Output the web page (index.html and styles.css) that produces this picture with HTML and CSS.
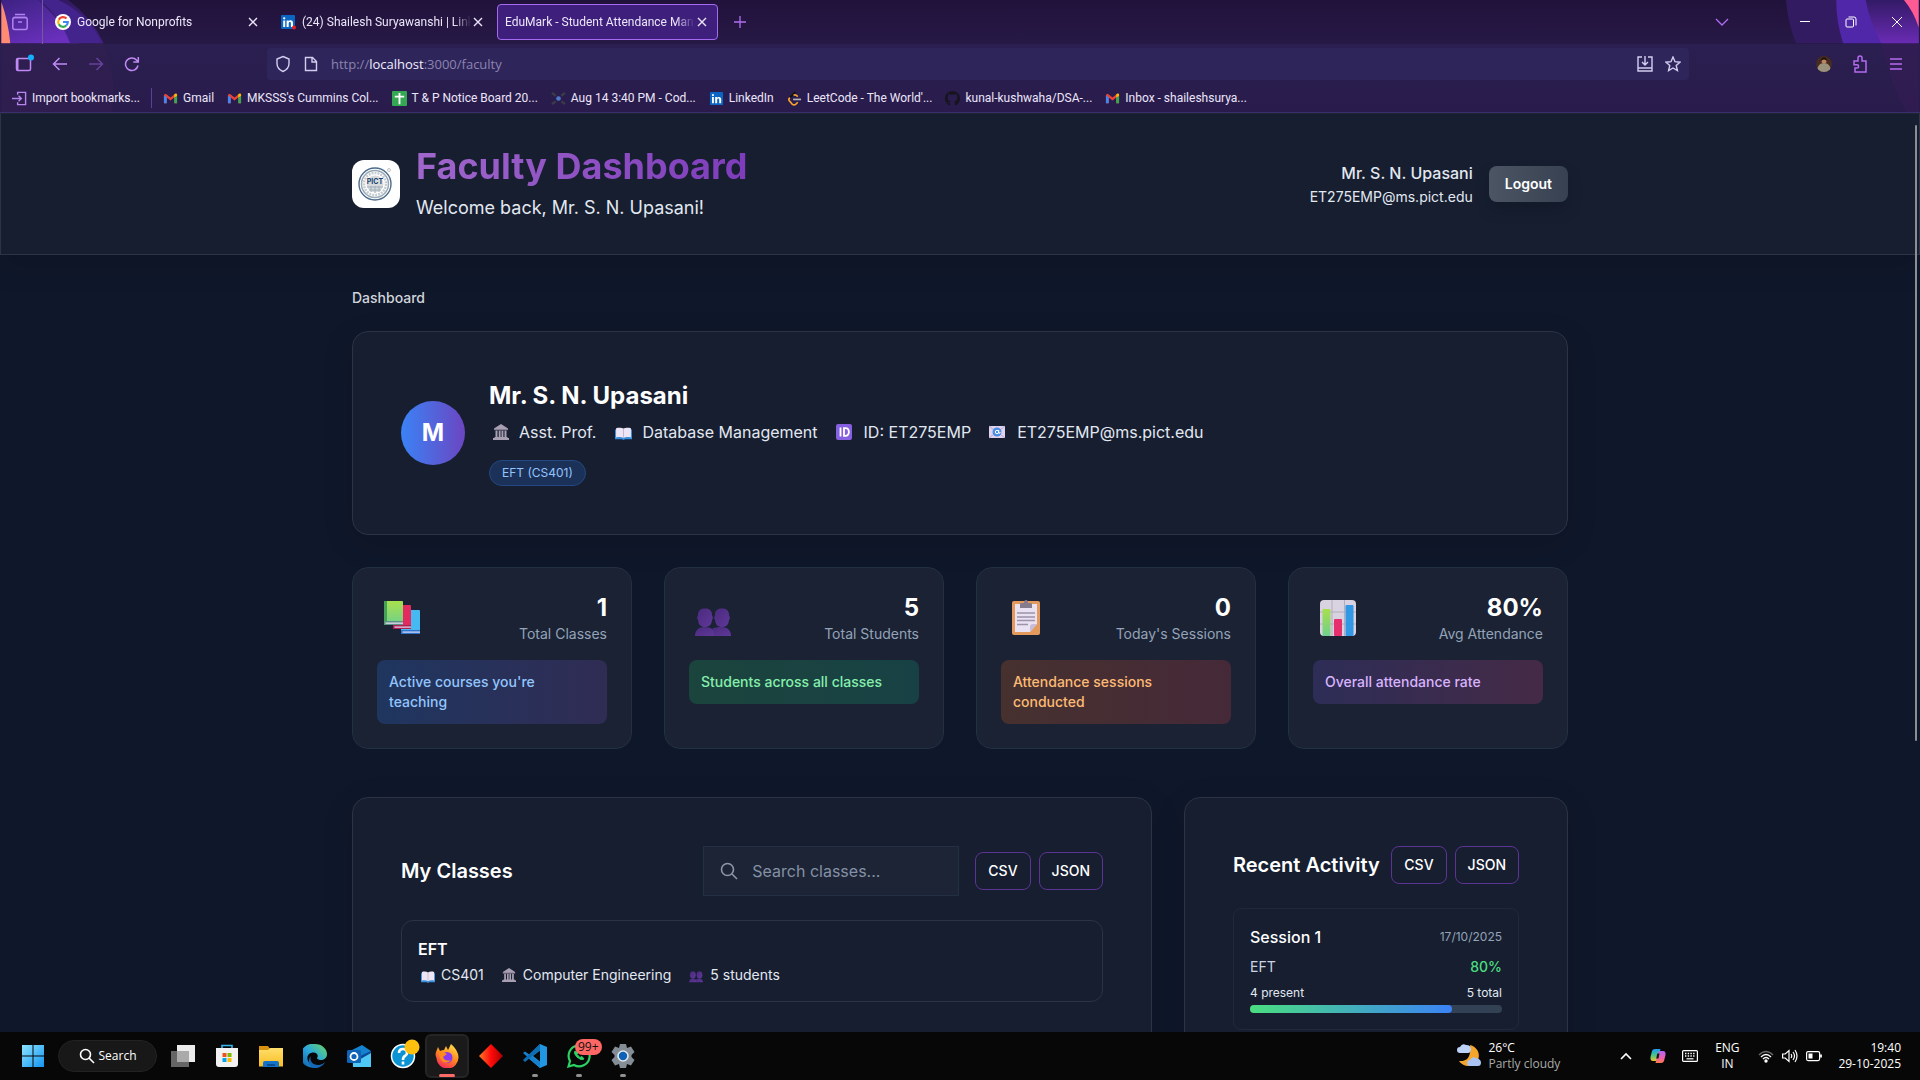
FILE: index.html
```html
<!DOCTYPE html>
<html lang="en">
<head>
<meta charset="utf-8">
<title>EduMark - Student Attendance Management</title>
<link rel="stylesheet" href="styles.css">
</head>
<body>
<svg class="defs" width="0" height="0" aria-hidden="true">
  <defs>
    <linearGradient id="g-book1" x1="0" y1="0" x2="0" y2="1"><stop offset="0" stop-color="#a8e04c"/><stop offset="1" stop-color="#6fd08c"/></linearGradient>
    <linearGradient id="g-head" x1="0" y1="0" x2="1" y2="1"><stop offset="0" stop-color="#4a2a7d"/><stop offset="1" stop-color="#5f3899"/></linearGradient>
    <linearGradient id="g-win" x1="0" y1="0" x2="1" y2="1"><stop offset="0" stop-color="#8be4ff"/><stop offset="1" stop-color="#1494f2"/></linearGradient>
    <linearGradient id="g-edge" x1="0" y1="1" x2="1" y2="0"><stop offset="0" stop-color="#0c59a4"/><stop offset=".5" stop-color="#2aa7de"/><stop offset="1" stop-color="#6bd95c"/></linearGradient>
    <linearGradient id="g-fox" x1=".8" y1="0" x2=".3" y2="1"><stop offset="0" stop-color="#ffe14a"/><stop offset=".5" stop-color="#ff8a1e"/><stop offset="1" stop-color="#f5275c"/></linearGradient>
    <linearGradient id="g-gem" x1="0" y1="0" x2="1" y2="0"><stop offset="0" stop-color="#ff7a2a"/><stop offset=".5" stop-color="#ff0a0a"/><stop offset="1" stop-color="#a80000"/></linearGradient>
    <linearGradient id="g-folder" x1="0" y1="0" x2="0" y2="1"><stop offset="0" stop-color="#ffdf6b"/><stop offset="1" stop-color="#f9bd24"/></linearGradient>
    <linearGradient id="g-copa" x1="0" y1="0" x2="0" y2="1"><stop offset="0" stop-color="#1f9bf0"/><stop offset=".5" stop-color="#43c58a"/><stop offset="1" stop-color="#e8c22f"/></linearGradient>
    <linearGradient id="g-copb" x1="0" y1="0" x2="0" y2="1"><stop offset="0" stop-color="#b066f5"/><stop offset=".6" stop-color="#f060a8"/><stop offset="1" stop-color="#ff7a4a"/></linearGradient>
    <symbol id="gmail" viewBox="0 0 16 16"><path d="M1 4v9h3V7l4 3 4-3v6h3V4l-2-1-5 4-5-4z" fill="#ea4335"/><path d="M1 4.500V13h3V7z" fill="#4285f4"/><path d="M15 4.500V13h-3V7z" fill="#34a853"/><path d="M12 3.700V7l3-2V4c0-1.500-2-1.800-3-.3z" fill="#fbbc04"/></symbol>
    <symbol id="linkedin" viewBox="0 0 16 16"><rect x="1" y="1" width="14" height="14" rx="1" fill="#0a66c2"/><path d="M3.200 6.400h2V13h-2zM4.200 3.200a1.100 1.100 0 1 1 0 2.300 1.100 1.100 0 0 1 0-2.300M6.600 6.400h2v.9c.8-1.500 4.400-1.600 4.400 1.600V13h-2.100V9.500c0-2-2.200-1.800-2.200 0V13H6.600z" fill="#fff"/></symbol>
    <symbol id="close" viewBox="0 0 12 12"><path d="M2 2l8 8M10 2l-8 8" stroke="currentColor" stroke-width="1.400"/></symbol>
    <symbol id="bank" viewBox="0 0 16 16"><path d="M8 0l7 4.500V6H1V4.500zM2.500 6.500h2V13h-2zM5.700 6.500h1.900V13H5.700zM8.500 6.500h1.900V13H8.500zM11.500 6.500h2V13h-2zM1.500 13h13v1H16v2H0v-2h1.500z" fill="#a99fb3"/><path d="M1 5.300h14v.9H1z" fill="#7d7389"/></symbol>
    <symbol id="book" viewBox="0 0 16 16" preserveAspectRatio="none"><path d="M0 4h16v11H9.500L8 16l-1.500-1H0z" fill="#3b8fdc"/><path d="M1 2.500c3-1 5.500-.5 7 .5 1.500-1 4-1.500 7-.5V13c-3-.6-5.500-.3-7 .8-1.500-1.100-4-1.400-7-.8z" fill="#eee6f5"/><path d="M8 3v10.500" stroke="#c4bad0"/></symbol>
    <symbol id="people" viewBox="0 0 36 36"><g fill="url(#g-head)"><path d="M3 8c0-5 3-6.500 7-6.500S17 3 17 8l1 3-1 2c-.5 5-3 7-7 7s-6.500-2-7-7l-1-2z"/><path d="M20 8c0-5 3-6.500 7-6.500S34 3 34 8l1 3-1 2c-.5 5-3 7-7 7s-6.500-2-7-7l-1-2z"/><path d="M0 29c0-5 3-9 9-9 8 0 11 3 11 9H0z"/><path d="M19 29c0-5-.500-5-2-7 2-1.500 5-2 10-2 6 0 9 4 9 9z"/></g></symbol>
  </defs>
</svg>

<div class="browser">
  <svg class="theme-left" viewBox="0 0 160 114" aria-hidden="true">
    <defs><linearGradient id="tl" x1="0" y1="0" x2=".6" y2="1"><stop offset="0" stop-color="#3d2282"/><stop offset="1" stop-color="#6a30bd"/></linearGradient>
    <linearGradient id="tl2" x1="0" y1="0" x2="1" y2="1"><stop offset="0" stop-color="#32195f"/><stop offset="1" stop-color="#4d24a0"/></linearGradient></defs>
    <path d="M0 0h68q24 18 36 44H0z" fill="url(#tl2)" opacity=".7"/>
    <path d="M0 0h38q20 20 40 44H0z" fill="url(#tl)"/>
    <path d="M38 0h20q30 14 44 44H70Q58 14 38 0z" fill="#43248d"/>
    <path d="M0 2q7 20 9 42H0z" fill="#ff8b72"/>
    <path d="M0 44h104q14 30 8 70H0z" fill="#3a2052" opacity=".35"/>
  </svg>
  <svg class="theme-right" viewBox="0 0 150 114" aria-hidden="true">
    <defs><linearGradient id="tr" x1="0" y1="0" x2="0" y2="1"><stop offset="0" stop-color="#331a66"/><stop offset="1" stop-color="#6a2bb4"/></linearGradient></defs>
    <path d="M15 0h135v44H25Q16 20 15 0z" fill="#331b62"/>
    <path d="M66 0h84v44H73Q66 22 66 0z" fill="#5027a8"/>
    <path d="M96 0h54v44h-38Q100 22 96 0z" fill="url(#tr)"/>
    <path d="M135 0h15v28q-5-16-15-28z" fill="#ff5a94"/>
    <path d="M112 44h38v70h-12q-18-30-26-70z" fill="#3d1c58" opacity=".4"/>
  </svg>
  <div class="tabbar">
    <button class="icon-btn view" aria-label="Firefox View"><svg width="18" height="18" viewBox="0 0 18 18" fill="none" stroke="#b182f0" stroke-width="1.500"><path d="M4 1.500h10M2.500 4.500h13"/><rect x="1.800" y="4.500" width="14.400" height="12" rx="2"/><path d="M7 9h4"/></svg></button>
    <div class="tabs">
      <div class="tab"><svg width="16" height="16" viewBox="0 0 16 16"><circle cx="8" cy="8" r="8" fill="#fff"/><g fill="none" stroke-width="2.200"><path d="M11.500 4.600A4.800 4.800 0 0 0 3.800 5.700" stroke="#ea4335"/><path d="M3.800 5.700a4.800 4.800 0 0 0 0 4.600" stroke="#fbbc05"/><path d="M3.800 10.300a4.800 4.800 0 0 0 7.500 1.200" stroke="#34a853"/><path d="M11.300 11.500A4.800 4.800 0 0 0 12.800 8H8" stroke="#4285f4"/></g></svg><span class="tab-title">Google for Nonprofits</span><button class="tab-x" aria-label="Close tab"><svg width="12" height="12"><use href="#close"/></svg></button></div>
      <div class="tab"><svg width="16" height="16" viewBox="0 0 16 16"><use href="#linkedin"/><circle cx="14" cy="13.500" r="2" fill="#e02020"/></svg><span class="tab-title">(24) Shailesh Suryawanshi | Link</span><button class="tab-x" aria-label="Close tab"><svg width="12" height="12"><use href="#close"/></svg></button></div>
      <div class="tab active"><span class="tab-title">EduMark - Student Attendance Man</span><button class="tab-x" aria-label="Close tab"><svg width="12" height="12"><use href="#close"/></svg></button></div>
    </div>
    <button class="icon-btn" aria-label="New tab"><svg width="14" height="14" viewBox="0 0 14 14"><path d="M7 1v12M1 7h12" stroke="#b06df0" stroke-width="1.300"/></svg></button>
    <span class="grow"></span>
    <button class="icon-btn list-tabs" aria-label="List all tabs"><svg width="14" height="14" viewBox="0 0 14 14"><path d="M1 4l6 6 6-6" stroke="#b06df0" stroke-width="1.300" fill="none"/></svg></button>
    <button class="win-btn" aria-label="Minimize"><svg width="12" height="12" viewBox="0 0 12 12"><path d="M1 5.500h10" stroke="#fff"/></svg></button>
    <button class="win-btn" aria-label="Restore"><svg width="12" height="12" viewBox="0 0 12 12" fill="none" stroke="#fff"><rect x="1" y="3" width="7.500" height="8" rx="1"/><path d="M3.500 1H9q2 0 2 2v6.500"/></svg></button>
    <button class="win-btn" aria-label="Close"><svg width="12" height="12" viewBox="0 0 12 12"><path d="M1 1l10 10M11 1L1 11" stroke="#fff"/></svg></button>
  </div>
  <div class="navbar">
    <div class="nav-left">
      <button class="icon-btn" aria-label="Sidebar"><svg width="20" height="20" viewBox="0 0 20 20" fill="none"><rect x="2.500" y="4.500" width="14" height="12" rx="1.500" stroke="#c08af5" stroke-width="1.500"/><path d="M3.500 5v11" stroke="#c08af5" stroke-width="2"/><circle cx="17" cy="3.500" r="3" fill="#12b0ff"/></svg></button>
      <button class="icon-btn" aria-label="Back"><svg width="16" height="16" viewBox="0 0 16 16" fill="none" stroke="#c08af5" stroke-width="1.500"><path d="M15 8H1.500M7.500 2l-6 6 6 6"/></svg></button>
      <button class="icon-btn" aria-label="Forward"><svg width="16" height="16" viewBox="0 0 16 16" fill="none" stroke="#66429a" stroke-width="1.500"><path d="M1 8h13.500M8.500 2l6 6-6 6"/></svg></button>
      <button class="icon-btn" aria-label="Reload"><svg width="16" height="16" viewBox="0 0 16 16" fill="none" stroke="#c08af5" stroke-width="1.500"><path d="M14 9.500A6.300 6.300 0 1 1 12.500 4l1.500 1.500M14.300 1v5h-5"/></svg></button>
    </div>
    <div class="urlbar">
      <svg width="16" height="18" viewBox="0 0 16 18" fill="none" stroke="#d4cdf0" stroke-width="1.400"><path d="M8 1.500l6 2.500v4.500c0 4-2.500 6.500-6 8-3.500-1.500-6-4-6-8V4z"/></svg>
      <svg width="16" height="16" viewBox="0 0 16 16" fill="none" stroke="#d4cdf0" stroke-width="1.400"><path d="M2.500 1.500h7l4 4v9h-11zM9 2v4h4"/></svg>
      <span class="url">http://<b>localhost</b>:3000/faculty</span>
      <svg width="16" height="16" viewBox="0 0 16 16" fill="none" stroke="#d4cdf0" stroke-width="1.400"><path d="M5 1H1v14h14V1h-4M1 12h14M8 0v9M5 6l3 3 3-3"/></svg>
      <svg width="16" height="16" viewBox="0 0 16 16" fill="none" stroke="#d4cdf0" stroke-width="1.400"><path d="M8 1l2 4.700 5 .5-3.800 3.300 1.200 5L8 12l-4.400 2.500 1.200-5L1 6.200l5-.5z"/></svg>
    </div>
    <div class="nav-right">
      <button class="icon-btn" aria-label="Account"><svg width="16" height="16" viewBox="0 0 16 16"><clipPath id="av"><circle cx="8" cy="8" r="8"/></clipPath><g clip-path="url(#av)"><path d="M0 0h16v16H0z" fill="#472a20"/><path d="M1 16c0-6 3-9 7-9s7 3 7 9z" fill="#9a927c"/><circle cx="8" cy="5" r="2.500" fill="#b98660"/><path d="M5 5c0-5 6-5 6 0-2-2-4-2-6 0z" fill="#22150f"/></g></svg></button>
      <button class="icon-btn" aria-label="Extensions"><svg width="16" height="18" viewBox="0 0 16 18" fill="none" stroke="#b56bf0" stroke-width="1.500"><path d="M6 6V3a2 2 0 0 1 4 0v3h4v11H3v-4h2a1.600 1.600 0 0 0 0-3.200H2V6z"/></svg></button>
      <button class="icon-btn" aria-label="Menu"><svg width="14" height="14" viewBox="0 0 14 14" stroke="#b56bf0" stroke-width="1.300"><path d="M1 2h12M1 7h12M1 12h12"/></svg></button>
    </div>
  </div>
  <nav class="bookmarks">
    <a href="#"><svg width="15" height="15" viewBox="0 0 16 16" fill="none" stroke="#b586ee" stroke-width="1.500"><path d="M6 4V1.500h8.500v13H6V12M0 8h10M7 5l3 3-3 3"/></svg>Import bookmarks...</a>
    <span class="sep"></span>
    <a href="#"><svg width="15" height="15"><use href="#gmail"/></svg>Gmail</a>
    <a href="#"><svg width="15" height="15"><use href="#gmail"/></svg>MKSSS's Cummins Col...</a>
    <a href="#"><svg width="15" height="15" viewBox="0 0 16 16"><rect width="16" height="16" rx="1" fill="#34a853"/><path d="M8 2v12M3 6h10" stroke="#fff" stroke-width="2"/></svg>T &amp; P Notice Board 20...</a>
    <a href="#"><svg width="15" height="15" viewBox="0 0 16 16"><path d="M1 2l4 3M15 2l-4 3M1 14l4-3M15 14l-4-3" stroke="#3a3c48" stroke-width="2.500"/><circle cx="8" cy="8" r="2.500" fill="#4f78c4"/></svg>Aug 14 3:40 PM - Cod...</a>
    <a href="#"><svg width="15" height="15"><use href="#linkedin"/></svg>LinkedIn</a>
    <a href="#"><svg width="15" height="15" viewBox="0 0 16 16" fill="none" stroke-width="1.800"><path d="M9 1L3 7" stroke="#111"/><path d="M3 7q-2 2 0 4l2.500 3q2 1.500 4 0l2-2" stroke="#f5a32a"/><path d="M7 4.500q2-1 4.500 1.500" stroke="#f5a32a"/><path d="M6.500 9H15" stroke="#b5b2b8"/></svg>LeetCode - The World'...</a>
    <a href="#"><svg width="15" height="15" viewBox="0 0 16 16"><path d="M8 0a8 8 0 0 0-2.500 15.600V13c-2 .4-2.600-1-3-1.600 1.500-.2 1.600 1 3 .6.100-.6.300-1 .6-1.200-2.500-.3-3.600-1.800-3.300-4 0-.7.300-1.200.7-1.700-.2-.7-.2-1.500.1-2 1 0 1.700.6 2.200 1 1.300-.4 3-.4 4.300 0 .6-.5 1.300-1 2.300-1 .3.600.3 1.300.1 2 .4.500.7 1 .7 1.700.2 2.500-.8 3.700-3.300 4 .4.500.6 1 .6 1.800v3A8 8 0 0 0 8 0" fill="#17131f"/></svg>kunal-kushwaha/DSA-...</a>
    <a href="#"><svg width="15" height="15"><use href="#gmail"/></svg>Inbox - shaileshsurya...</a>
  </nav>
</div>

<div class="viewport">
  <header class="site-header">
    <div class="container head-row">
      <div class="logo"><svg width="36" height="36" viewBox="0 0 36 36"><g fill="none"><circle cx="17" cy="18" r="16" stroke="#4d6d8d" stroke-width="1.400"/><circle cx="17" cy="18" r="13.500" stroke="#9aa9b5" stroke-width="1.500"/><circle cx="17" cy="18" r="11" stroke="#c5cdd3" stroke-width="2.500" stroke-dasharray="2 1"/><circle cx="17" cy="18" r="8.500" fill="#d9dadb"/><path d="M9 21h16M11 24h12M17 20v7M13 20v6M21 20v6" stroke="#9fb0bd"/><circle cx="31" cy="4" r="1.500" stroke="#aaa" stroke-width=".7"/></g><text x="17" y="18" text-anchor="middle" class="logo-text">PICT</text></svg></div>
      <div class="head-titles">
        <h1>Faculty Dashboard</h1>
        <p>Welcome back, Mr. S. N. Upasani!</p>
      </div>
      <div class="head-user"><strong>Mr. S. N. Upasani</strong><span>ET275EMP@ms.pict.edu</span></div>
      <button class="logout">Logout</button>
    </div>
  </header>
  <main class="container main">
    <p class="crumb">Dashboard</p>
    <section class="card profile">
      <div class="avatar">M</div>
      <div>
        <h2>Mr. S. N. Upasani</h2>
        <ul class="facts">
          <li><svg width="22" height="16"><use href="#bank" x="4" width="16" height="16"/></svg>Asst. Prof.</li>
          <li><svg width="22" height="16"><use href="#book" x="3" y="2" width="17" height="14"/></svg>Database Management</li>
          <li><svg width="22" height="16" viewBox="0 0 22 16"><rect x="2" width="16" height="16" rx="2" fill="#8660e0"/><path d="M6.500 3.500v9M10 4.200h1.500c4.500 0 4.500 7.600 0 7.600H10z" stroke="#fff" stroke-width="1.800" fill="none"/></svg>ID: ET275EMP</li>
          <li><svg width="22" height="16" viewBox="0 0 22 16"><rect x="2" y="2" width="16" height="12" rx="1" fill="#e0d3f0"/><path d="M2 2l5 4M18 2l-5 4M2 14l5-4M18 14l-5-4" stroke="#bba8d2"/><circle cx="10" cy="8" r="4.500" fill="#4b8fe2"/><circle cx="10" cy="8" r="1.700" fill="none" stroke="#fff"/><path d="M11.700 6v3q1.500 1 1.500-1" fill="none" stroke="#fff"/></svg>ET275EMP@ms.pict.edu</li>
        </ul>
        <span class="pill">EFT (CS401)</span>
      </div>
    </section>

    <section class="stats">
      <article class="stat">
        <div class="stat-top"><svg width="50" height="36" viewBox="0 0 50 36"><g transform="translate(7 1)"><rect x="17" y="9" width="19" height="24" rx="1" fill="#46b8f2"/><path d="M17 29h19v4H17z" fill="#2c75cf"/><path d="M18.500 30.500H36v1.200H18.500z" fill="#e4dcf2"/><rect x="9" y="4" width="18" height="24" rx="1" fill="#e22c60"/><path d="M9 24h18v4H9z" fill="#b01e52"/><path d="M10.500 25.500H27v1.200H10.500z" fill="#e4dcf2"/><rect width="19" height="24" rx="1" fill="url(#g-book1)"/><path d="M0 0h3v24H0z" fill="#45a05a"/><path d="M1 20h18v4H1z" fill="#5c8f83"/><path d="M1.500 21.500H19v1.300H1.500z" fill="#e4dcf2"/></g></svg>
          <div class="stat-num"><strong>1</strong><span>Total Classes</span></div></div>
        <p class="note blue">Active courses you're teaching</p>
      </article>
      <article class="stat">
        <div class="stat-top"><svg width="50" height="36"><use href="#people" x="6" y="7" width="36" height="36"/></svg>
          <div class="stat-num"><strong>5</strong><span>Total Students</span></div></div>
        <p class="note green">Students across all classes</p>
      </article>
      <article class="stat">
        <div class="stat-top"><svg width="50" height="36" viewBox="0 0 50 36"><g transform="translate(11 0)"><rect y="1" width="28" height="34" rx="2" fill="#e49a5c"/><path d="M3 4h22v20l-7 8H3z" fill="#e9e2f3"/><path d="M25 24v0l-7 8v-5q0-3 3-3z" fill="#c9bcd8"/><path d="M8 8V4q0-1 2-1h2q0-3 2-3t2 3h2q2 0 2 1v4z" fill="#857c8e"/><path d="M5 13h18M5 17h18M5 20.500h18M5 24.500h11" stroke="#9d93ab" stroke-width="1.300"/></g></svg>
          <div class="stat-num"><strong>0</strong><span>Today's Sessions</span></div></div>
        <p class="note orange">Attendance sessions conducted</p>
      </article>
      <article class="stat">
        <div class="stat-top"><svg width="50" height="36" viewBox="0 0 50 36"><g transform="translate(7 0)"><rect width="36" height="36" rx="4" fill="#d9d2e0"/><path d="M12 0v36M24.500 0v36M0 12h36M0 24h36" stroke="#b4abc0"/><rect x="2.500" y="9" width="8" height="27" rx="1" fill="url(#g-book1)"/><rect x="14" y="19" width="8" height="17" rx="1" fill="#e6306e"/><rect x="25.500" y="5" width="8" height="31" rx="1" fill="#3297e4"/></g></svg>
          <div class="stat-num"><strong>80%</strong><span>Avg Attendance</span></div></div>
        <p class="note purple">Overall attendance rate</p>
      </article>
    </section>

    <section class="columns">
      <div class="card panel">
        <div class="panel-head">
          <h3>My Classes</h3>
          <div class="tools">
            <label class="search"><svg width="18" height="18" viewBox="0 0 18 18" fill="none" stroke="#8d96a6" stroke-width="1.600"><circle cx="7.500" cy="7.500" r="6"/><path d="M12 12l5 5"/></svg><input type="text" placeholder="Search classes..." aria-label="Search classes"></label>
            <div class="exports"><button class="outline">CSV</button><button class="outline">JSON</button></div>
          </div>
        </div>
        <div class="class-item">
          <h4>EFT</h4>
          <ul class="meta">
            <li><svg width="19" height="16"><use href="#book" x="3" y="3" width="14" height="13"/></svg>CS401</li>
            <li><svg width="19" height="16"><use href="#bank" x="2" y="1" width="14" height="14"/></svg>Computer Engineering</li>
            <li><svg width="19" height="16"><use href="#people" x="2" y="4" width="14" height="14"/></svg>5 students</li>
          </ul>
        </div>
      </div>
      <div class="card panel">
        <div class="panel-head">
          <h3>Recent Activity</h3>
          <div class="exports"><button class="outline">CSV</button><button class="outline">JSON</button></div>
        </div>
        <div class="session">
          <div class="row"><h4>Session 1</h4><time>17/10/2025</time></div>
          <div class="row mid"><span>EFT</span><b>80%</b></div>
          <div class="row counts"><span>4 present</span><span>5 total</span></div>
          <div class="bar"><div class="fill" style="width:80%"></div></div>
        </div>
      </div>
    </section>
  </main>
  <div class="scrollbar"></div>
</div>

<footer class="taskbar">
  <button class="task" aria-label="Start"><svg width="24" height="24" viewBox="0 0 24 24" fill="url(#g-win)"><path d="M1 1h10.500v10.500H1zM12.500 1H23v10.500H12.500zM1 12.500h10.500V23H1zM12.500 12.500H23V23H12.500z"/></svg></button>
  <button class="task-search"><svg width="16" height="16" viewBox="0 0 16 16" fill="none" stroke="#fff" stroke-width="1.600"><circle cx="6.500" cy="6.500" r="5"/><path d="M10 10l5 5"/></svg>Search</button>
  <button class="task" aria-label="Task view"><svg width="24" height="24" viewBox="0 0 24 24"><rect x="6" y="1" width="18" height="17" fill="#ececec"/><rect y="7" width="18" height="16" fill="#666"/><path d="M6 7h12v11H6z" fill="#aaa"/></svg></button>
  <button class="task" aria-label="Store"><svg width="24" height="24" viewBox="0 0 24 24"><path d="M7 5V1.500h10V5" fill="none" stroke="#34b8f2" stroke-width="1.600"/><path d="M1 4h22v16q0 3-3 3H4q-3 0-3-3z" fill="#f2f2f2"/><path d="M7.500 9h4v4h-4z" fill="#f25022"/><path d="M12.500 9h4v4h-4z" fill="#7fba00"/><path d="M7.500 14h4v4h-4z" fill="#00a4ef"/><path d="M12.500 14h4v4h-4z" fill="#ffb900"/></svg></button>
  <button class="task" aria-label="Files"><svg width="24" height="24" viewBox="0 0 24 24"><path d="M0 2h9l2 3v5H0z" fill="#d9940f"/><path d="M0 6h9l2-2h13v18.500H0z" fill="url(#g-folder)"/><path d="M4 23v-4q0-2 2-2h12q2 0 2 2v4z" fill="#1473c8"/><path d="M8 20h8v2H8z" fill="#0b4f91"/></svg></button>
  <button class="task" aria-label="Edge"><svg width="24" height="24" viewBox="0 0 24 24"><path d="M12 0c7 0 12 5 12 10 0 4-3 6-6.500 6-3 0-4-1.500-3-3 1-2-1-4.500-4-4.500C6 8.500 3 12 5 17c2 4 6 6 10 5.500A12 12 0 1 1 12 0z" fill="url(#g-edge)"/><path d="M8 12c-2 5 2 9.500 8 9 3-.5 5-2 6-3-2 4-6 6-10 6C6 24 4 16 8 12z" fill="#1467b5"/></svg></button>
  <button class="task" aria-label="Outlook"><svg width="24" height="24" viewBox="0 0 24 24"><path d="M5 6l10-5 9 6v16H6z" fill="#1582d0"/><path d="M6 14l18-5v14H6z" fill="#50c8f5"/><path d="M10 17l14-8v-2L11 13z" fill="#0b4a96"/><rect y="6" width="14" height="13" rx="1.500" fill="#0f64b8"/><circle cx="7" cy="12.500" r="3.500" fill="none" stroke="#fff" stroke-width="1.800"/></svg></button>
  <button class="task" aria-label="Help"><svg width="34" height="34" viewBox="0 0 34 34"><circle cx="17" cy="17" r="11.500" fill="#0c93d4" stroke="#fff" stroke-width="1.500"/><path d="M13 14q0-4 4-4t4 4q0 2-2 3t-2 4M17 22.500v3" fill="none" stroke="#fff" stroke-width="2.600"/><circle cx="26" cy="8" r="7.500" fill="#ffbf0f"/></svg></button>
  <button class="task open" aria-label="Firefox"><svg width="24" height="24" viewBox="0 0 24 24"><path d="M1 8l2-5 2 4q2-1 4-1l2-4 2 4 3-6q7 6 7.500 13A11 11 0 0 1 1.500 14Q0 11 1 8z" fill="url(#g-fox)"/><circle cx="12" cy="13.500" r="5.500" fill="#8a3bf0"/><path d="M4 9q4-2 8 1l-4 3q2 5 8 3-3 4-8 2-4-3-4-9z" fill="#ff8a1e"/></svg><i class="ind"></i></button>
  <button class="task" aria-label="Gem"><svg width="24" height="24" viewBox="0 0 24 24"><path d="M12 0l12 12-12 12L0 12z" fill="url(#g-gem)"/></svg></button>
  <button class="task" aria-label="Code"><svg width="24" height="24" viewBox="0 0 24 24"><path d="M17 0l7 3v18l-7 3L4 13z" fill="#2196e3"/><path d="M2 7.500L0 9l17 15v-6z" fill="#1680cc"/><path d="M17 6L2 18l-2-2L17 0z" fill="#0c6fb5"/><path d="M17 6.500v11L10 12z" fill="#070707"/></svg><i class="ind"></i></button>
  <button class="task" aria-label="WhatsApp"><svg width="24" height="24" viewBox="0 0 24 24" fill="none" stroke="#2bd163" stroke-width="2.200"><path d="M1.500 22.500L3 17A10.500 10.500 0 1 1 7 21z"/><path d="M8 7q-2 2 2 6t7 2l-2-2.500-2 1-3-3 1-2z" fill="#2bd163" stroke-width="1"/></svg><span class="badge">99+</span><i class="ind"></i></button>
  <button class="task" aria-label="Settings"><svg width="24" height="24" viewBox="0 0 24 24"><path d="M9 0h6l1 4 4-1.500L23.500 8l-3 3v2l3 3-3.500 5.500L16 20l-1 4H9l-1-4-4 1.500L.5 16l3-3v-2l-3-3L4 2.500 8 4z" fill="#848c95"/><circle cx="12" cy="12" r="5" fill="#0d62b5" stroke="#e2e7ec" stroke-width="1.600"/></svg><i class="ind"></i></button>
  <span class="grow"></span>
  <div class="weather"><svg width="24" height="24" viewBox="0 0 24 24"><path d="M13 1a11 11 0 0 1 8 15A11 11 0 0 1 2 17q13 1 11-16z" fill="#f5a62a"/><path d="M3 9a3 3 0 0 1 0-6q2-4 6-2 5 0 5 4t-3 4z" fill="#bcd3f7"/><path d="M13 22a3 3 0 0 1 0-6q2-4 6-2 5 1 5 4.500T21 22z" fill="#a9c4f2"/></svg><div><p>26°C</p><p class="dim">Partly cloudy</p></div></div>
  <div class="tray">
    <svg width="16" height="16" viewBox="0 0 16 16"><path d="M3 11l5-5 5 5" stroke="#fff" stroke-width="1.600" fill="none"/></svg>
    <svg width="16" height="16" viewBox="0 0 16 16"><path d="M5 1h5.500L8 11q-.6 2-2 2H3Q0 13 .5 9L2 3q.600-2 3-2z" fill="url(#g-copa)"/><path d="M11 15H5.500L8 5q.6-2 2-2h3q3 0 2.500 4L14 13q-.6 2-3 2z" fill="url(#g-copb)"/><path d="M7.300 5.500h2.200L8.500 10.500H6.200z" fill="#151515"/></svg>
    <svg width="16" height="16" viewBox="0 0 16 16" fill="none" stroke="#fff" stroke-width="1.200"><rect x=".6" y="2.600" width="14.800" height="10.800" rx="1"/><path d="M3 5.500h10M3 8h10" stroke-dasharray="1.400 1.300" stroke-width="1.500"/><path d="M4.500 10.800h7"/></svg>
    <p class="lang">ENG<br>IN</p>
    <div class="status">
      <svg width="16" height="16" viewBox="0 0 16 16" fill="none" stroke="#fff" stroke-width="1.400"><path d="M1 7q7-7 14 0" stroke="#666"/><path d="M3 9q5-5 10 0M5 11q3-3 6 0"/><circle cx="8" cy="13" r="1" fill="#fff"/></svg>
      <svg width="16" height="16" viewBox="0 0 16 16" fill="none" stroke="#fff" stroke-width="1.200"><path d="M.6 6v4h2.600L7 13.500v-11L3.200 6zM9 6q1.500 2 0 4M11 4q3 4 0 8M13 2q4 6 0 12"/></svg>
      <svg width="16" height="16" viewBox="0 0 16 16" fill="none" stroke="#fff" stroke-width="1.200"><rect x=".6" y="3.600" width="13" height="9" rx="1.500"/><path d="M2.500 5.500h4v5h-4z" fill="#fff" stroke="none"/><path d="M15 6.500v3" stroke-width="1.800"/></svg>
    </div>
    <p class="clock">19:40<br>29-10-2025</p>
  </div>
</footer>
</body>
</html>
```
FILE: styles.css
```css
* { box-sizing: border-box; margin: 0; padding: 0; }
body {
  height: 100vh;
  display: flex;
  flex-direction: column;
  overflow: hidden;
  background: #0f172a;
  color: #fff;
  font-family: Inter, "Noto Sans", sans-serif;
}
button { font: inherit; color: inherit; background: none; border: 0; }
ul { list-style: none; }
svg { flex: none; display: block; }
.defs { position: absolute; }
.grow { flex: 1; }

/* browser chrome */
.browser {
  position: relative;
  flex: none;
  font: 12px/16px Roboto, "Noto Sans", sans-serif;
  color: #ece6fa;
  background: linear-gradient(#20123a, #271946 44px, #2a1f50 44px, #291c4c);
  border-bottom: 1px solid #3a2f6c;
}
.theme-left, .theme-right { position: absolute; top: 0; height: 112px; }
.theme-left { left: 0; width: 160px; }
.theme-right { right: 0; width: 150px; }
.tabbar, .navbar, .bookmarks { display: flex; align-items: center; position: relative; }
.tabbar { height: 44px; }
.icon-btn { width: 36px; height: 36px; display: grid; place-items: center; flex: none; }
.view { width: 43px; height: 44px; padding-right: 3px; border-right: 1px solid #735a9f; }
.tabs { display: flex; gap: 4px; padding-left: 4px; margin-right: 4px; }
.tab { width: 221px; height: 36px; display: flex; align-items: center; gap: 6px; padding: 0 8px; border-radius: 4px; }
.tab.active { background: #3e1f7c; border: 1px solid #a56af2; padding: 0 8px 0 7px; }
.tab-title { flex: 1; min-width: 0; overflow: hidden; white-space: nowrap; mask-image: linear-gradient(90deg, #000 90%, transparent); }
.tab-x { display: grid; place-items: center; width: 14px; height: 20px; margin-left: -6px; }
.list-tabs { margin-right: 42px; }
.win-btn { width: 46px; height: 44px; display: grid; place-items: center; }
.navbar { height: 40px; }
.nav-left { display: flex; padding-left: 6px; width: 267px; }
.urlbar { flex: 1; height: 32px; display: flex; align-items: center; gap: 12px; padding: 0 8px; background: #2e265a; border-radius: 4px; }
.url { flex: 1; font-family: "Open Sans", sans-serif; font-size: 13px; color: #8d83b0; }
.url b { font-weight: 400; color: #f2eeff; }
.nav-right { width: 231px; display: flex; justify-content: flex-end; padding-right: 6px; }
.bookmarks { height: 28px; padding: 0 12px; gap: 13px; }
.bookmarks a { display: flex; align-items: center; gap: 5px; color: inherit; text-decoration: none; white-space: nowrap; }
.sep { width: 1px; height: 20px; background: #5b4191; margin: 0 -2px; }

/* page */
.viewport { position: relative; flex: 1; min-height: 0; overflow: hidden; background: #0f172a; }
.container { width: 100%; max-width: 1280px; margin: 0 auto; padding: 0 32px; }
.site-header { background: #161e30; border: 1px solid #2c3447; border-top-color: #1d2634; padding: 32px 0; box-shadow: 0 8px 32px rgba(0, 0, 0, .12); }
.head-row { display: flex; align-items: center; gap: 16px; }
.logo { width: 48px; height: 48px; border-radius: 12px; background: #fff; display: grid; place-items: center; }
.logo-text { font: 700 7px Inter, sans-serif; fill: #1c4573; }
.head-titles { flex: 1; }
h1 {
  font-size: 36px; line-height: 40px; font-weight: 700; margin-bottom: 8px; width: max-content;
  background: linear-gradient(90deg, #a067cb, #7e3cbb);
  -webkit-background-clip: text; background-clip: text; color: transparent;
}
.head-titles p { font-size: 18px; line-height: 28px; color: #e2e8f0; }
.head-user { text-align: right; display: flex; flex-direction: column; gap: 2px; color: #e2e8f0; }
.head-user strong { font-size: 16px; line-height: 24px; font-weight: 500; }
.head-user span { font-size: 14px; line-height: 20px; }
.logout { font-size: 14px; line-height: 20px; font-weight: 600; padding: 8px 16px; border-radius: 8px; background: linear-gradient(90deg, #4b5563, #374151); box-shadow: 0 8px 16px rgba(0, 0, 0, .15); }
.main { padding-top: 33px; }
.crumb { font-size: 14px; line-height: 20px; font-weight: 500; color: #d1d5db; margin-bottom: 23px; }
.card { background: #161e30; border: 1px solid #2b3346; border-radius: 16px; padding: 48px; box-shadow: 0 8px 32px rgba(0, 0, 0, .12); }
.profile { display: flex; align-items: center; gap: 24px; }
.avatar { width: 64px; height: 64px; border-radius: 50%; display: grid; place-items: center; font-size: 24px; line-height: 32px; font-weight: 700; background: linear-gradient(90deg, #3b82f6, #6b46c1); }
h2 { font-size: 24px; line-height: 32px; font-weight: 700; margin-bottom: 8px; }
.facts { display: flex; gap: 16px; font-size: 16px; line-height: 24px; color: #e2e8f0; margin-bottom: 16px; }
.facts li { display: flex; align-items: center; gap: 8px; }
.pill { display: block; width: max-content; font-size: 12px; line-height: 16px; padding: 4px 12px; border: 1px solid #234883; border-radius: 13px; background: #1c3158; color: #93c5fd; }
.stats { display: grid; grid-template-columns: repeat(4, 1fr); gap: 32px; margin: 32px 0 48px; }
.stat { background: #1a2234; border: 1px solid #223042; border-radius: 16px; padding: 24px; }
.stat-top { display: flex; align-items: center; justify-content: space-between; margin-bottom: 16px; }
.stat-num { display: flex; flex-direction: column; text-align: right; }
.stat-num strong { font-size: 24px; line-height: 32px; font-weight: 700; }
.stat-num span { font-size: 14px; line-height: 20px; color: #94a3b8; }
.note { font-size: 14px; line-height: 20px; font-weight: 500; padding: 12px; border-radius: 8px; }
.blue { color: #93c5fd; background: linear-gradient(90deg, #1f365f, #302c54); }
.green { color: #86efac; background: linear-gradient(90deg, #1b443d, #184145); }
.orange { color: #fdba74; background: linear-gradient(90deg, #46312f, #452938); }
.purple { color: #d8b4fe; background: linear-gradient(90deg, #2d2d57, #452a46); }
.columns { display: grid; grid-template-columns: 800fr 384fr; gap: 32px; }
.panel-head { display: flex; align-items: center; justify-content: space-between; margin-bottom: 24px; }
h3 { font-size: 20px; line-height: 28px; font-weight: 600; white-space: nowrap; }
.tools { display: flex; align-items: center; gap: 16px; }
.search { display: flex; align-items: center; gap: 14px; width: 256px; height: 50px; padding: 0 16px; background: #1c2436; border: 1px solid #213042; }
.search input { flex: 1; min-width: 0; background: none; border: 0; outline: 0; color: #fff; font: 16px/24px Inter, sans-serif; }
.search input::placeholder { color: #8591a5; opacity: 1; }
.exports { display: flex; gap: 8px; }
.outline { font-size: 14px; line-height: 20px; font-weight: 500; padding: 8px 12px; border: 1px solid #5b3494; border-radius: 8px; }
.class-item { border: 1px solid #2b3346; border-radius: 12px; padding: 16px; }
h4 { font-size: 16px; line-height: 24px; font-weight: 600; }
.class-item h4 { margin-bottom: 4px; }
.meta { display: flex; gap: 16px; font-size: 14px; line-height: 20px; color: #e2e8f0; }
.meta li { display: flex; align-items: center; gap: 4px; }
.session { border: 1px solid #20293b; border-radius: 8px; padding: 16px; }
.session h4 { font-weight: 500; }
.row { display: flex; justify-content: space-between; align-items: center; }
time { font-size: 12px; line-height: 16px; color: #94a3b8; }
.mid { font-size: 14px; line-height: 20px; color: #cbd5e1; margin: 8px 0; }
.mid b { font-weight: 500; color: #4ade80; }
.counts { font-size: 12px; line-height: 16px; color: #e2e8f0; margin-bottom: 4px; }
.bar { height: 8px; border-radius: 4px; background: #334155; }
.fill { height: 8px; border-radius: 4px; background: linear-gradient(90deg, #4ade80, #3b82f6); }
.scrollbar { position: absolute; right: 3px; top: 12px; width: 2px; height: 67%; background: #8b8e92; border-radius: 1px; }

/* taskbar */
.taskbar { flex: none; height: 48px; display: flex; align-items: center; padding: 0 19px 0 11px; background: #070707; font: 12px/16px "Open Sans", "Noto Sans", sans-serif; }
.task { position: relative; width: 44px; height: 44px; display: grid; place-items: center; flex: none; }
.task-search { display: flex; align-items: center; justify-content: center; gap: 4px; width: 99px; height: 32px; margin: 0 4px 0 3px; border-radius: 16px; background: #181818; border: 1px solid #222; }
.task.open { background: #1a1a1a; border: 2px solid #252525; border-radius: 6px; }
.ind { position: absolute; bottom: 1px; left: 19px; width: 6px; height: 3px; border-radius: 2px; background: #909090; }
.open .ind { left: 12px; bottom: -1px; width: 16px; background: #ff6b66; }
.badge { position: absolute; left: 18px; top: 5px; height: 16px; padding: 0 3px; border-radius: 8px; background: #ff6764; color: #111; line-height: 15px; }
.weather { display: flex; align-items: center; gap: 7px; margin-right: 58px; }
.dim { color: #aaa; }
.tray { display: flex; align-items: center; gap: 16px; }
.lang { text-align: center; margin: 0 1px 0 -1px; width: 28px; }
.status { display: flex; gap: 8px; }
.clock { text-align: right; }
```
